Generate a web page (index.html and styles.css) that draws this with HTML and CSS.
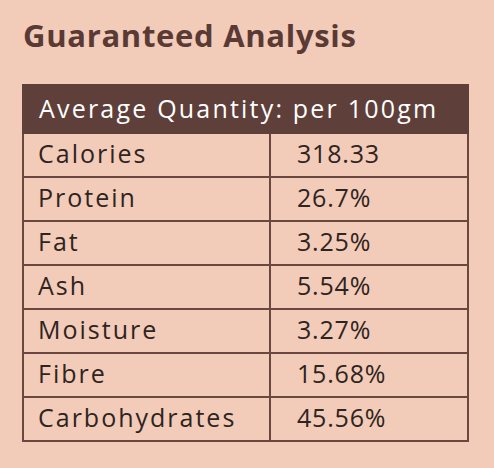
FILE: index.html
```html
<!DOCTYPE html>
<html lang="en">
<head>
    <meta charset="UTF-8">
    <meta name="viewport" content="width=device-width, initial-scale=1.0">
    <title>Guaranteed Analysis</title>
    <link rel="stylesheet" href="styles.css">
</head>
<body>
<div class="analysis">
    <h2>Guaranteed Analysis</h2>
    <table class="analysis-table">
        <colgroup>
            <col class="col-name">
            <col class="col-value">
        </colgroup>
        <thead>
            <tr>
                <th colspan="2">Average Quantity: per 100gm</th>
            </tr>
        </thead>
        <tbody>
            <tr><td>Calories</td><td>318.33</td></tr>
            <tr><td>Protein</td><td>26.7%</td></tr>
            <tr><td>Fat</td><td>3.25%</td></tr>
            <tr><td>Ash</td><td>5.54%</td></tr>
            <tr><td>Moisture</td><td>3.27%</td></tr>
            <tr><td>Fibre</td><td>15.68%</td></tr>
            <tr><td>Carbohydrates</td><td>45.56%</td></tr>
        </tbody>
    </table>
</div>
</body>
</html>
```

FILE: styles.css
```css
body {
    margin: 0;
    padding: 0;
    background-color: #f2cbb9;
    font-family: "Open Sans", Arial, sans-serif;
    color: #2e2420;
}
.analysis {
    padding: 14px 0 0 22px;
}
.analysis h2 {
    margin: 0 0 28px 1px;
    font-size: 31px;
    line-height: 42px;
    font-weight: 700;
    letter-spacing: 0.7px;
    color: #5a3a35;
}
.analysis-table {
    border-collapse: collapse;
    width: 445px;
    table-layout: fixed;
}
.col-name {
    width: 247px;
}
.col-value {
    width: 198px;
}
.analysis-table th {
    background: #5f3f3a;
    color: #ffffff;
    font-weight: 400;
    font-size: 25px;
    letter-spacing: 2.2px;
    text-align: left;
    height: 43px;
    padding: 0 0 3px 15px;
    border: 2px solid #5f3f3a;
}
.analysis-table td {
    border: 2px solid #6b4741;
    font-size: 25px;
    letter-spacing: 2px;
    height: 44px;
    padding: 0 0 4px 14px;
    box-sizing: border-box;
}
.analysis-table td:last-child {
    padding-left: 26px;
    letter-spacing: 0.8px;
}
```
